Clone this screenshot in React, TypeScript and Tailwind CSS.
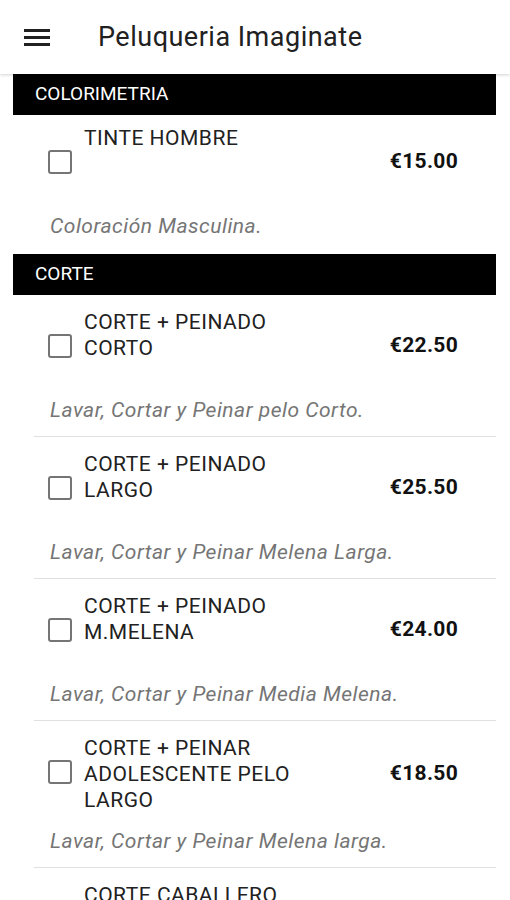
import React from 'react';

type Service = {
  name: string;
  price: string;
  desc: string;
};

const sections: { title: string; items: Service[] }[] = [
  {
    title: 'COLORIMETRIA',
    items: [{ name: 'TINTE HOMBRE', price: '€15.00', desc: 'Coloración Masculina.' }],
  },
  {
    title: 'CORTE',
    items: [
      { name: 'CORTE + PEINADO CORTO', price: '€22.50', desc: 'Lavar, Cortar y Peinar pelo Corto.' },
      { name: 'CORTE + PEINADO LARGO', price: '€25.50', desc: 'Lavar, Cortar y Peinar Melena Larga.' },
      { name: 'CORTE + PEINADO M.MELENA', price: '€24.00', desc: 'Lavar, Cortar y Peinar Media Melena.' },
      { name: 'CORTE + PEINAR ADOLESCENTE PELO LARGO', price: '€18.50', desc: 'Lavar, Cortar y Peinar Melena larga.' },
      { name: 'CORTE CABALLERO', price: '€12.00', desc: 'Lavar y Cortar.' },
    ],
  },
];

function ServiceRow({ item, first, last }: { item: Service; first: boolean; last: boolean }) {
  return (
    <div className={first ? 'pt-[10px]' : 'pt-[14px]'}>
      <div className="flex min-h-[73px]">
        <div className="ml-[35px] mt-[25px] h-[24px] w-[24px] shrink-0 rounded-[3px] border-2 border-[#757575]" />
        <div className="ml-[12px] w-[225px] text-[21px] leading-[26px] tracking-[0.5px] text-[#212121]">{item.name}</div>
        <div className="ml-auto mr-[38px] self-center text-[21px] font-bold tracking-[0.3px] text-[#111]">{item.price}</div>
      </div>
      <div className="mt-[16px] pl-[37px] text-[21px] italic leading-[24px] tracking-[0.5px] text-[#757575]">{item.desc}</div>
      <div className={last ? 'pb-[16px]' : 'ml-[21px] border-b border-[#e0e0e0] pb-[14px]'} />
    </div>
  );
}

export default function App() {
  return (
    <div className="h-screen overflow-hidden bg-white font-['Roboto',sans-serif]">
      <div className="relative z-10 flex h-[74px] items-center bg-white shadow-[0_1px_3px_rgba(0,0,0,0.18)]">
        <svg width="26" height="18" viewBox="0 0 26 18" className="ml-[24px] mt-[1px]">
          <rect x="0" y="0" width="26" height="3" fill="#212121" />
          <rect x="0" y="7" width="26" height="3" fill="#212121" />
          <rect x="0" y="14" width="26" height="3" fill="#212121" />
        </svg>
        <h1 className="ml-[48px] text-[27px] font-normal tracking-[0.5px] text-[#212121]">Peluqueria Imaginate</h1>
      </div>

      <div className="ml-[13px] mr-[14px]">
        {sections.map((section, si) => (
          <div key={si}>
            <div className="flex h-[41px] items-center bg-black px-[22px] text-[19px] text-white">
              {section.title}
            </div>
            {section.items.map((item, i) => (
              <ServiceRow
                key={i}
                item={item}
                first={si === 0 && i === 0}
                last={i === section.items.length - 1}
              />
            ))}
          </div>
        ))}
      </div>
    </div>
  );
}
